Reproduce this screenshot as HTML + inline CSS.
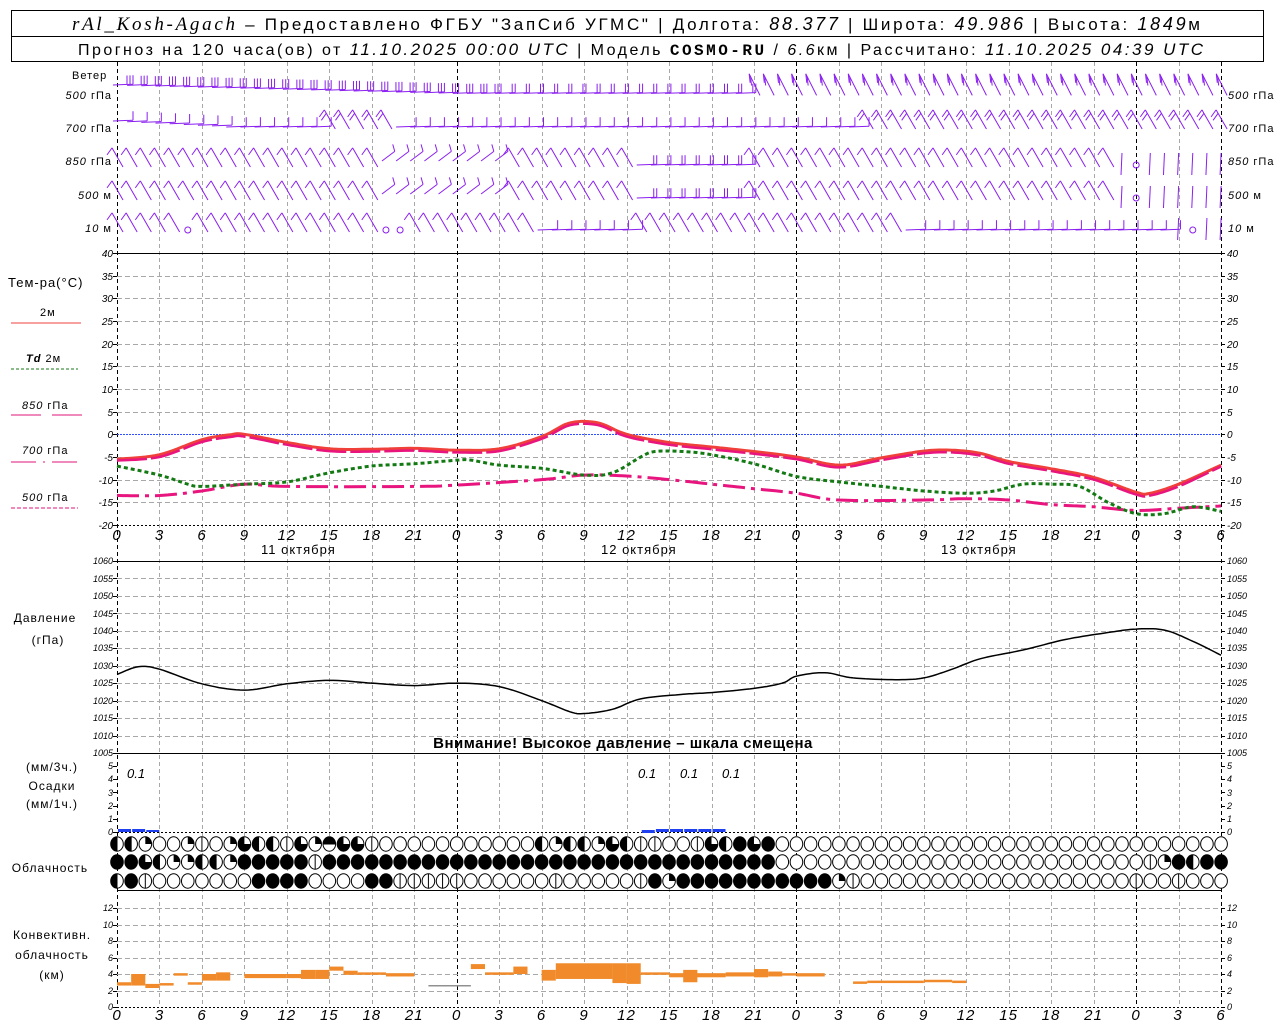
<!DOCTYPE html>
<html><head><meta charset="utf-8">
<style>
html,body{margin:0;padding:0;background:#fff;width:1280px;height:1024px;overflow:hidden}
svg{display:block;font-family:"Liberation Sans","DejaVu Sans",sans-serif}
.t{fill:#000}
.i{font-style:italic}
.yl{font-style:italic;fill:#000}
.xl{font-size:15px;font-style:italic;fill:#000;letter-spacing:1px}
.lb{fill:#000;letter-spacing:1px}
</style></head><body>
<svg id="s" width="1280" height="1024" viewBox="0 0 1280 1024" xmlns="http://www.w3.org/2000/svg">
<rect width="1280" height="1024" fill="#fff"/>
<rect x="11.5" y="10.5" width="1252" height="51" fill="none" stroke="#000"/>
<line x1="11" y1="36.5" x2="1264" y2="36.5" stroke="#000"/>
<text x="72" y="30" class="t" font-size="17" textLength="1128" lengthAdjust="spacing"><tspan font-family="Liberation Serif" font-style="italic" font-size="19">rAl_Kosh-Agach</tspan> – Предоставлено ФГБУ "ЗапСиб УГМС" | Долгота: <tspan class="i" font-size="18">88.377</tspan> | Широта: <tspan class="i" font-size="18">49.986</tspan> | Высота: <tspan class="i" font-size="18">1849</tspan>м</text>
<text x="78" y="55" class="t" font-size="16" textLength="1125" lengthAdjust="spacing">Прогноз на 120 часа(ов) от <tspan class="i" font-size="17">11.10.2025 00:00 UTC</tspan>  | Модель <tspan font-family="Liberation Mono" font-weight="bold">COSMO-RU</tspan> / <tspan class="i">6.6</tspan>км | Рассчитано: <tspan class="i" font-size="17">11.10.2025 04:39 UTC</tspan></text>
<g id="grid"></g>
<g id="data"></g>
<g class="lb" font-size="11">
<text x="72" y="79">Ветер</text>
<text x="112" y="99" text-anchor="end"><tspan class="i">500</tspan> гПа</text>
<text x="112" y="132" text-anchor="end"><tspan class="i">700</tspan> гПа</text>
<text x="112" y="165" text-anchor="end"><tspan class="i">850</tspan> гПа</text>
<text x="112" y="199" text-anchor="end"><tspan class="i">500</tspan>  м</text>
<text x="112" y="232" text-anchor="end"><tspan class="i">10</tspan>   м</text>
<text x="1228" y="99"><tspan class="i">500</tspan> гПа</text>
<text x="1228" y="132"><tspan class="i">700</tspan> гПа</text>
<text x="1228" y="165"><tspan class="i">850</tspan> гПа</text>
<text x="1228" y="199"><tspan class="i">500</tspan>  м</text>
<text x="1228" y="232"><tspan class="i">10</tspan>   м</text>
</g>
<g class="lb">
<text x="8" y="287" font-size="13">Тем-ра(°С)</text>
<text x="40" y="316" font-size="11">2м</text>
<line x1="11" y1="323" x2="81" y2="323" stroke="#f04040"/>
<text x="26" y="362" font-size="11"><tspan class="i" font-weight="bold">Td</tspan>  2м</text>
<line x1="11" y1="369" x2="78" y2="369" stroke="#1a7a1a" stroke-dasharray="3,2"/>
<text x="22" y="409" font-size="11"><tspan class="i">850</tspan> гПа</text>
<line x1="11" y1="415" x2="41" y2="415" stroke="#e0157a"/><line x1="52" y1="415" x2="82" y2="415" stroke="#e0157a"/>
<text x="22" y="454" font-size="11"><tspan class="i">700</tspan> гПа</text>
<line x1="11" y1="462" x2="77" y2="462" stroke="#e0157a" stroke-dasharray="25,7,2,7"/>
<text x="22" y="501" font-size="11"><tspan class="i">500</tspan> гПа</text>
<line x1="11" y1="508" x2="78" y2="508" stroke="#e0157a" stroke-dasharray="4,2"/>
</g>
<g class="yl" font-size="10">
<text x="113" y="257" text-anchor="end">40</text><text x="113" y="280" text-anchor="end">35</text><text x="113" y="302" text-anchor="end">30</text><text x="113" y="325" text-anchor="end">25</text><text x="113" y="348" text-anchor="end">20</text><text x="113" y="370" text-anchor="end">15</text><text x="113" y="393" text-anchor="end">10</text><text x="113" y="416" text-anchor="end">5</text><text x="113" y="438" text-anchor="end">0</text><text x="113" y="461" text-anchor="end">-5</text><text x="113" y="484" text-anchor="end">-10</text><text x="113" y="506" text-anchor="end">-15</text><text x="113" y="529" text-anchor="end">-20</text>
<text x="1227" y="257">40</text><text x="1227" y="280">35</text><text x="1227" y="302">30</text><text x="1227" y="325">25</text><text x="1227" y="348">20</text><text x="1227" y="370">15</text><text x="1227" y="393">10</text><text x="1227" y="416">5</text><text x="1227" y="438">0</text><text x="1227" y="461">-5</text><text x="1227" y="484">-10</text><text x="1227" y="506">-15</text><text x="1227" y="529">-20</text>
</g>
<g id="xl" class="xl" text-anchor="middle">
<text x="117" y="540">0</text><text x="159.5" y="540">3</text><text x="202" y="540">6</text><text x="244.4" y="540">9</text><text x="286.8" y="540">12</text><text x="329.3" y="540">15</text><text x="371.8" y="540">18</text><text x="414.2" y="540">21</text><text x="456.7" y="540">0</text><text x="499" y="540">3</text><text x="541.6" y="540">6</text><text x="584" y="540">9</text><text x="626.5" y="540">12</text><text x="669" y="540">15</text><text x="711.4" y="540">18</text><text x="753.9" y="540">21</text><text x="796.3" y="540">0</text><text x="838.8" y="540">3</text><text x="881.3" y="540">6</text><text x="923.7" y="540">9</text><text x="966" y="540">12</text><text x="1008.6" y="540">15</text><text x="1051" y="540">18</text><text x="1093.5" y="540">21</text><text x="1136" y="540">0</text><text x="1178" y="540">3</text><text x="1221" y="540">6</text>
</g>
<use href="#xl" y="480"/>
<g class="lb" font-size="13">
<text x="261" y="554">11 октября</text><text x="601" y="554">12 октября</text><text x="941" y="554">13 октября</text>
</g>
<g class="yl" font-size="9">
<text x="113" y="564" text-anchor="end">1060</text><text x="113" y="582" text-anchor="end">1055</text><text x="113" y="599" text-anchor="end">1050</text><text x="113" y="617" text-anchor="end">1045</text><text x="113" y="634" text-anchor="end">1040</text><text x="113" y="651" text-anchor="end">1035</text><text x="113" y="669" text-anchor="end">1030</text><text x="113" y="686" text-anchor="end">1025</text><text x="113" y="704" text-anchor="end">1020</text><text x="113" y="721" text-anchor="end">1015</text><text x="113" y="739" text-anchor="end">1010</text><text x="113" y="756" text-anchor="end">1005</text>
<text x="1227" y="564">1060</text><text x="1227" y="582">1055</text><text x="1227" y="599">1050</text><text x="1227" y="617">1045</text><text x="1227" y="634">1040</text><text x="1227" y="651">1035</text><text x="1227" y="669">1030</text><text x="1227" y="686">1025</text><text x="1227" y="704">1020</text><text x="1227" y="721">1015</text><text x="1227" y="739">1010</text><text x="1227" y="756">1005</text>
<text x="113" y="835" text-anchor="end">0</text><text x="113" y="822" text-anchor="end">1</text><text x="113" y="809" text-anchor="end">2</text><text x="113" y="796" text-anchor="end">3</text><text x="113" y="782" text-anchor="end">4</text><text x="113" y="769" text-anchor="end">5</text>
<text x="1227" y="835">0</text><text x="1227" y="822">1</text><text x="1227" y="809">2</text><text x="1227" y="796">3</text><text x="1227" y="782">4</text><text x="1227" y="769">5</text>
<text x="113" y="1010" text-anchor="end">0</text><text x="113" y="994" text-anchor="end">2</text><text x="113" y="977" text-anchor="end">4</text><text x="113" y="961" text-anchor="end">6</text><text x="113" y="944" text-anchor="end">8</text><text x="113" y="928" text-anchor="end">10</text><text x="113" y="911" text-anchor="end">12</text>
<text x="1227" y="1010">0</text><text x="1227" y="994">2</text><text x="1227" y="977">4</text><text x="1227" y="961">6</text><text x="1227" y="944">8</text><text x="1227" y="928">10</text><text x="1227" y="911">12</text>
</g>
<g class="lb" font-size="12" text-anchor="middle">
<text x="45" y="622">Давление</text><text x="48" y="644">(гПа)</text>
<text x="52" y="771">(мм/3ч.)</text><text x="52" y="790">Осадки</text><text x="52" y="808">(мм/1ч.)</text>
<text x="50" y="872">Облачность</text>
<text x="52" y="939">Конвективн.</text><text x="52" y="959">облачность</text><text x="52" y="979">(км)</text>
</g>
<text x="623" y="748" text-anchor="middle" font-size="15" font-weight="bold" letter-spacing="0.5" font-family="Liberation Sans">Внимание! Высокое давление – шкала смещена</text>
<g class="yl" font-size="13">
<text x="127" y="778">0.1</text><text x="638" y="778">0.1</text><text x="680" y="778">0.1</text><text x="722" y="778">0.1</text>
</g>
</svg>
<script>
(function(){
var NS="http://www.w3.org/2000/svg",G=document.getElementById("grid"),D=document.getElementById("data");
function el(p,n,a){var e=document.createElementNS(NS,n);for(var k in a)e.setAttribute(k,a[k]);p.appendChild(e);return e;}
function X(h){return 117+h*14.155;}
var GR="#a8a8a8";
for(var i=0;i<=26;i++){var x=Math.round(X(i*3))+0.5;var day=(i%8==0)||i==26;
 el(G,"line",{x1:x,y1:62,x2:x,y2:1007,stroke:day?"#000":GR,"stroke-dasharray":"4,3","stroke-width":1});}
function hl(y,c,da){el(G,"line",{x1:117,y1:y,x2:1221,y2:y,stroke:c||GR,"stroke-dasharray":da||"5,3"});}
for(var v=35;v>=-15;v-=5){hl(Math.round(253+(40-v)*4.533)+0.5,v==0?"#3050ff":GR,v==0?"2,1":"5,3");}
for(var p=1055;p>1005;p-=5){hl(Math.round(561+(1060-p)*3.49)+0.5);}
for(var k=2;k<=12;k+=2){hl(Math.round(1007-k*8.25)+0.5);}
[253.5,561.5,753.5,890.5].forEach(function(y){el(G,"line",{x1:117,y1:y,x2:1221,y2:y,stroke:"#000"});});
el(G,"line",{x1:117,y1:525.5,x2:1221,y2:525.5,stroke:"#000","stroke-dasharray":"2,2"});
el(G,"line",{x1:117,y1:832.5,x2:1221,y2:832.5,stroke:"#000","stroke-dasharray":"2,2"});
el(G,"line",{x1:117,y1:1007.5,x2:1221,y2:1007.5,stroke:"#000","stroke-dasharray":"2,2"});
[[253,525,12],[561,753,11],[766,832,5],[908,1007,6]].forEach(function(a){for(var j=0;j<=a[2];j++){var y=Math.round(a[0]+(a[1]-a[0])*j/a[2])+0.5;
 el(G,"line",{x1:113,y1:y,x2:117,y2:y,stroke:"#000"});el(G,"line",{x1:1221,y1:y,x2:1225,y2:y,stroke:"#000"});}});
function curve(pts,yf,attr){var arr=[];for(var i=0;i<pts.length-1;i++){var p0=pts[Math.max(0,i-1)],p1=pts[i],p2=pts[i+1],p3=pts[Math.min(pts.length-1,i+2)];
 for(var t=0;t<1;t+=0.1){var t2=t*t,t3=t2*t;
  var h=0.5*((2*p1[0])+(-p0[0]+p2[0])*t+(2*p0[0]-5*p1[0]+4*p2[0]-p3[0])*t2+(-p0[0]+3*p1[0]-3*p2[0]+p3[0])*t3);
  var v=0.5*((2*p1[1])+(-p0[1]+p2[1])*t+(2*p0[1]-5*p1[1]+4*p2[1]-p3[1])*t2+(-p0[1]+3*p1[1]-3*p2[1]+p3[1])*t3);
  arr.push(X(h).toFixed(1)+","+yf(v).toFixed(1));}}
 var l=pts[pts.length-1];arr.push(X(l[0]).toFixed(1)+","+yf(l[1]).toFixed(1));
 attr.points=arr.join(" ");attr.fill="none";el(D,"polyline",attr);}
function TY(t){return 434.3-t*4.533;}
var T2=[[0,-5.5],[3,-4.5],[6,-1.2],[8,-0.1],[9,0],[12,-1.8],[15,-3.2],[18,-3.3],[21,-3.1],[24,-3.5],[27,-3.2],[30,-0.5],[32,2.5],[34,2.5],[36,0],[39,-1.8],[42,-2.8],[45,-3.8],[48,-5],[51,-6.8],[54,-5.2],[57,-3.7],[59,-3.5],[61,-4.2],[63,-6],[66,-7.6],[69,-9.5],[72,-12.8],[73,-13],[75,-11],[78,-6.8]];
var T85=T2.map(function(p,i){return [p[0],p[1]-(i>0&&i<T2.length-1?0.5:0.3)];});
var TD=[[0,-7],[3,-9],[5,-11],[6,-11.5],[9,-11],[12,-10.5],[15,-8.5],[18,-7],[21,-6.5],[24,-5.7],[25,-5.7],[27,-6.8],[30,-7.5],[33,-9],[35,-8.5],[37,-5],[38,-3.8],[40,-3.8],[42,-4.5],[45,-6.5],[48,-9.3],[51,-10.5],[54,-11.5],[57,-12.5],[60,-13],[62,-12.5],[64,-11],[66,-11],[68,-11.5],[70,-15],[72,-17.5],[74,-17.5],[76,-16],[78,-17]];
var T7=[[0,-13.5],[3,-13.5],[6,-12.5],[9,-11],[12,-11.5],[21,-11.5],[24,-11.2],[30,-10],[33,-9],[36,-9.2],[39,-10],[42,-11],[45,-12],[48,-13],[51,-14.5],[57,-14.5],[60,-14.2],[63,-14.5],[66,-15.5],[69,-16],[72,-16.8],[75,-16.3],[78,-15.8]];
curve(T7,TY,{stroke:"#e8157e","stroke-width":3,"stroke-dasharray":"22,6,4,6"});
curve(TD,TY,{stroke:"#137a13","stroke-width":3,"stroke-dasharray":"4,3"});
curve(T2,TY,{stroke:"#f0403a","stroke-width":3});
curve(T85,TY,{stroke:"#e8157e","stroke-width":2.5,"stroke-dasharray":"30,4"});
var PR=[[0,1027.5],[1.5,1029.7],[3,1029],[6,1024.8],[9,1023],[12,1024.8],[15,1025.8],[18,1025],[21,1024.3],[24,1025],[27,1024],[30,1020],[32,1016.8],[33,1016.3],[35,1017.5],[37,1020.5],[40,1021.8],[42,1022.3],[45,1023.5],[47,1025],[48,1027],[50,1028],[52,1026.5],[55,1026],[57,1026.5],[59,1029],[61,1032],[64,1034.5],[67,1037.5],[70,1039.5],[72,1040.5],[74,1040.2],[76,1037],[78,1033]];
curve(PR,function(p){return 561+(1060-p)*3.49;},{stroke:"#000","stroke-width":1.5});
[[0],[1],[2]].forEach(function(a){el(D,"rect",{x:X(a[0])+1,y:a[0]==2?830:829,width:13,height:a[0]==2?2:3,fill:"#2040f0"});});
for(var h=37;h<43;h++)el(D,"rect",{x:X(h)+1,y:h==37?830:829,width:13,height:3,fill:"#2040f0"});
var rows=[
"221001v01322v31h33v"+"00000000000"+"2122132"+"vv00v32434"+"00000000000000000000000000000000",
"443211221"+"44444"+"v"+"44444444444444444444444444444444"+"00000000000000000000000000"+"v14244",
"24v"+"0000000"+"4444"+"0000"+"44"+"vvvvv"+"000000"+"v"+"00000"+"v41"+"44444444444"+"1v"+"0000000000000000000"+"v00v000"];
var cy=[844,862,881];
for(var r=0;r<3;r++){for(var i=0;i<79;i++){var c=rows[r][i]||"0",cx=X(i),y=cy[r];
 el(D,"ellipse",{cx:cx,cy:y,rx:6.3,ry:7.2,fill:c=="4"?"#000":"#fff",stroke:"#000","stroke-width":1});
 if(c=="v"||c=="2"){el(D,"line",{x1:cx,y1:y-7,x2:cx,y2:y+7,stroke:"#000"});}
 if(c=="2")el(D,"path",{d:"M"+cx+","+(y-7.2)+"A6.3,7.2 0 0,0 "+cx+","+(y+7.2)+"Z",fill:"#000"});
 if(c=="h"){el(D,"line",{x1:cx-6,y1:y,x2:cx+6,y2:y,stroke:"#000"});el(D,"path",{d:"M"+(cx-6.3)+","+y+"A6.3,7.2 0 0,1 "+(cx+6.3)+","+y+"Z",fill:"#000"});}
 if(c=="1")el(D,"path",{d:"M"+cx+","+y+"V"+(y-7.2)+"A6.3,7.2 0 0,1 "+(cx+6.3)+","+y+"Z",fill:"#000"});
 if(c=="3")el(D,"path",{d:"M"+cx+","+y+"V"+(y-7.2)+"A6.3,7.2 0 1,0 "+(cx+6.3)+","+y+"Z",fill:"#000"});
}}
var CV=[[0,1,2.6,3],[1,1,2.6,4],[2,1,2.3,2.8],[3,1,2.6,2.9],[4,1,3.8,4.1],[5,1,2.7,3],[6,1,3.2,4],[7,1,3.2,4.2],[9,3,3.5,4],[12,1,3.5,4],[13,1,3.4,4.5],[14,1,3.4,4.5],[15,1,4.4,4.9],[16,1,3.9,4.4],[17,1,3.9,4.2],[18,1,3.9,4.2],[19,2,3.7,4.1],[25,1,4.6,5.2],[26,2,3.9,4.2],[28,1,4,4.9],[30,1,3.2,4.5],[31,4,3.4,5.3],[35,1,2.9,5.3],[36,1,2.8,5.3],[37,2,3.9,4.2],[40,1,3,4.5],[39,3,3.6,4.1],[42,1,3.6,4.1],[43,2,3.7,4.2],[45,1,3.6,4.6],[46,1,3.7,4.3],[47,1,3.8,4.1],[48,2,3.7,4.1],[52,1,2.8,3.1],[53,4,2.9,3.2],[57,2,3,3.3],[59,1,2.9,3.2]];
CV.forEach(function(a){var y1=1007-a[3]*8.25,y2=1007-a[2]*8.25;el(D,"rect",{x:X(a[0]),y:y1,width:a[1]*14.155,height:Math.max(2,y2-y1),fill:"#f08a2a"});});
el(D,"rect",{x:X(22),y:985,width:3*14.155,height:1.5,fill:"#909090"});
var WC="#8a1ef0";
function seg(x1,y1,x2,y2){el(D,"line",{x1:x1,y1:y1,x2:x2,y2:y2,stroke:WC,"stroke-width":1});}
function barb(x,y,dx,dy,L,n,bx,by,sp){var tx=x+dx*L,ty=y+dy*L;seg(x,y,tx,ty);for(var k=0;k<n;k++){var px=tx-dx*k*(sp||3),py=ty-dy*k*(sp||3);seg(px,py,px+bx,py+by);}}
function lev(h,y,type,n){var x=X(h);
 if(type=="H"){barb(x-4,y,1,-0.04,20,n,0,-9,3);}
 else if(type=="D"){barb(x+6,y+2,-0.5,-0.87,22,n,-5,7,4);}
 else if(type=="U"){barb(x+6,y+2,-0.45,-0.9,24,n,1,9,3);}
 else if(type=="S"){barb(x-4,y-4,0.8,-0.6,16,n,-2,-7,4);}
 else if(type=="V"){seg(x,y-12,x-1,y+10);}
 else if(type=="O"){el(D,"ellipse",{cx:x,cy:y,rx:3,ry:3,fill:"none",stroke:WC});}}
for(var h=0;h<=78;h++){
 var y5=85+Math.min(h,24)*0.35;
 lev(h,y5,h<=44?"H":"U",h<=26?3:2);
 lev(h,127-(h<8?6-h*0.7:0),(h<=14||(h>=20&&h<=52))?"H":"D",h<=14||(h>=20&&h<=52)?1:2);
 var t8=(h<=18)?"D":(h<=27?"S":(h<=36?"D":(h<=44?"H":(h<=70?"D":(h==72?"O":"V")))));
 lev(h,165,t8,h>=37&&h<=44?2:1);
 lev(h,198,t8,h>=37&&h<=44?2:1);
 var t10=(h==5||h==19||h==20||h==76)?"O":(h<=29?"D":(h<=36?"H":(h<=55?"D":(h<=74?"H":"V"))));
 lev(h,230,t10,1);
}
})();
</script>
</body></html>
